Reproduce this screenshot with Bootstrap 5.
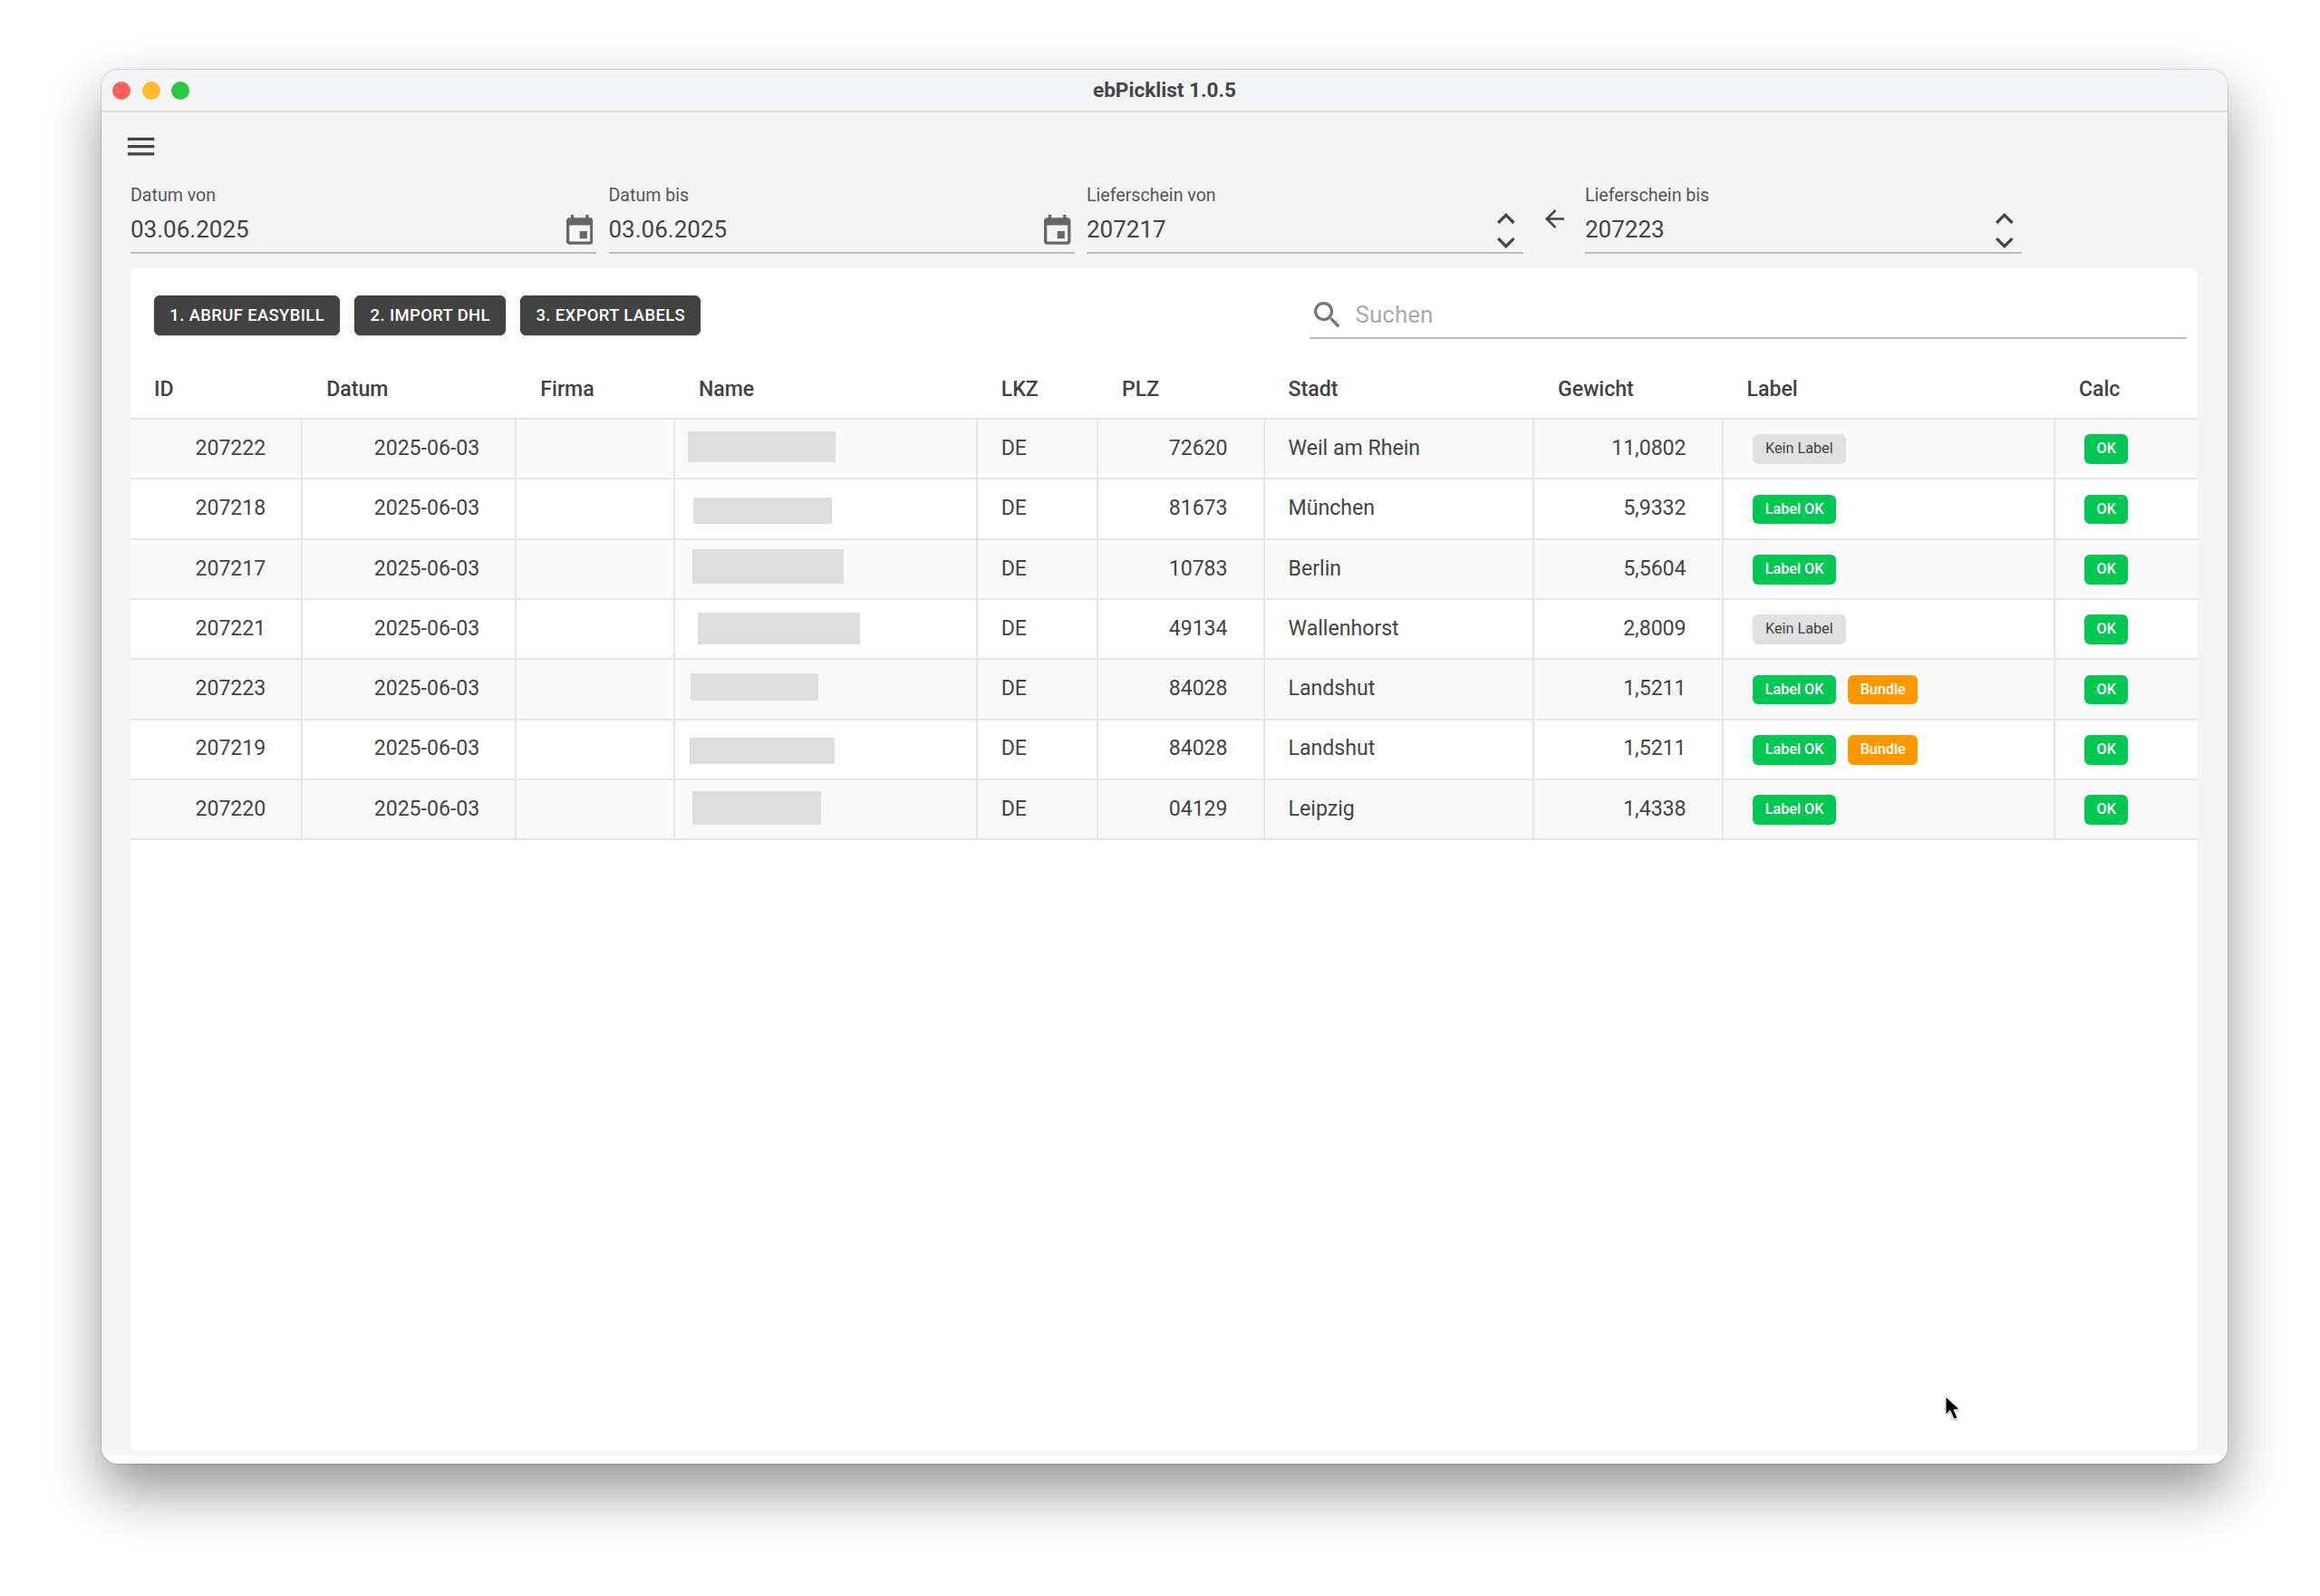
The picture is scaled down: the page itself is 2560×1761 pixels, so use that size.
<!DOCTYPE html>
<html lang="de">
<head>
<meta charset="utf-8">
<title>ebPicklist 1.0.5</title>
<link href="https://cdn.jsdelivr.net/npm/bootstrap@5.3.0/dist/css/bootstrap.min.css" rel="stylesheet">
<style>
html,body{height:100%;background:#fff;overflow:hidden}
body{font-family:Roboto,"Liberation Sans",sans-serif;color:#444;padding:77px 102px 0 112px;position:relative}
.appwin{width:2346px;height:1538px;border-radius:18px;background:#fff;box-shadow:0 30px 62px 0 rgba(0,0,0,.42),0 0 0 1px rgba(0,0,0,.13);overflow:hidden}
.titlebar{height:47px;background:#f4f5f7;border-bottom:2px solid #dcdcdc;display:grid;grid-template-columns:1fr auto 1fr;align-items:center;padding:0 12px}
.lights{gap:12.5px}
.tl{width:20px;height:20px;border-radius:50%}
.tl-r{background:#ff5f57}.tl-y{background:#febc2e}.tl-g{background:#28c840}
.apptitle{font-size:22.6px;font-weight:700;color:#454545}
.appbody{height:1482px;background:#f5f5f5;padding:0 33px 5px 32px}
.menurow{height:79px;padding-top:18px}
.menurow svg{width:39.2px;height:39.2px;margin-left:-8.5px;fill:#444;display:block}
.fld{flex:none;height:77px;border-bottom:2px solid #bdbdbd}
.fld-date{width:514px;margin-right:13.5px}
.fld-num{width:482px}
.fldlabel{font-size:19.6px;line-height:25px;color:#555;display:block}
.fldval{font-size:26px;line-height:30px;color:#444;padding-top:10px}
.calico{width:29.4px;height:32.7px;fill:#666;margin:9px 4px 0 0;flex:none}
.spin{gap:14.5px;margin:7px 9px 0 0;flex:none}
.spin svg{width:19.6px;height:12.1px;fill:#444;display:block}
.backico{width:21px;height:21px;fill:#444;margin:28px 23px 0 24px;flex:none}
.sheet{height:1305px;margin-top:16px;border-radius:6px;overflow:hidden}
.tools{height:100px;padding:30px 12px 0 26px}
.toolbtn{--bs-btn-bg:#424242;--bs-btn-border-color:#424242;--bs-btn-hover-bg:#424242;font-family:inherit;font-size:18.4px;font-weight:500;letter-spacing:.4px;text-transform:uppercase;height:44px;padding:0 16.3px 1px;border-radius:6px;line-height:42px;white-space:nowrap;box-shadow:0 1px 3px rgba(0,0,0,.2)}
.toolgap{gap:16px}
.seek{width:968.5px;height:48px;border-bottom:2px solid #bdbdbd;padding:4px 0 0 5px}
.seek svg{width:28.5px;height:28.5px;fill:#757575;margin-right:17.5px;margin-top:2.5px;flex:none}
.seek span{font-size:26px;color:#aaa;line-height:34px}
table.picktbl{--bs-table-striped-bg:#fafafa;--bs-table-bg:#fff;--bs-table-color:#444;--bs-table-striped-color:#444;margin:0;table-layout:fixed;width:2280.5px;border-collapse:separate;border-spacing:0;font-size:23.1px}
table.picktbl>thead>tr>th{height:67px;padding:3px 0 0 26px;font-weight:500;color:#424242;border-bottom:2px solid #e6e6e6;box-sizing:border-box;vertical-align:middle}
table.picktbl>tbody>tr>td{height:66.33px;padding:0 26px 0 26px;border-bottom:2px solid #e6e6e6;border-right:2px solid #e6e6e6;box-sizing:border-box;vertical-align:middle;color:#444}
table.picktbl>tbody>tr>td:last-child{border-right:0}
table.picktbl>tbody>tr>td.numcell{padding-right:39px;text-align:right}
table.picktbl>tbody>tr>td.namecell{padding:0;vertical-align:top}
table.picktbl>tbody>tr>td.chipcell{padding:1px 0 1px 32.5px}
.blank{display:block;background:#dedede}
.blank-1{margin:13px 0 0 14px;width:163px;height:33.5px}
.blank-2{margin:20px 0 0 20px;width:153px;height:28.5px}
.blank-3{margin:10.5px 0 0 19px;width:167px;height:37.5px}
.blank-4{margin:14px 0 0 25.5px;width:179px;height:35px}
.blank-5{margin:14.5px 0 0 17px;width:141px;height:30.5px}
.blank-6{margin:19px 0 0 16px;width:160px;height:29.5px}
.blank-7{margin:12.5px 0 0 19px;width:142px;height:37px}
.chip{font-family:inherit;font-size:16.2px;font-weight:500;line-height:32.5px;height:32.5px;padding:0 13.6px;border-radius:6px;letter-spacing:0;vertical-align:middle}
.chip-ok{background:#00c853;color:#fff}
.chip-calc{padding:0 13.2px}
.chip-warn{background:#ff9800;color:#fff;margin-left:13px}
.chip-none{background:#e0e0e0;color:#424242;padding:0 14px;font-weight:400}
.pointer{position:absolute;left:2145px;top:1539px;width:20px;height:30px;filter:drop-shadow(0 1px 1px rgba(0,0,0,.35))}
.c1{width:190.3px}.c2{width:236px}.c3{width:174.6px}.c4{width:333.8px}.c5{width:133.4px}.c6{width:183.5px}.c7{width:297.5px}.c8{width:208.5px}.c9{width:366.3px}.c10{width:156.6px}
</style>
</head>
<body>
<div class="appwin d-flex flex-column">
  <div class="titlebar">
    <div class="lights d-flex"><span class="tl tl-r"></span><span class="tl tl-y"></span><span class="tl tl-g"></span></div>
    <div class="apptitle">ebPicklist 1.0.5</div>
    <div></div>
  </div>
  <div class="appbody">
    <div class="menurow"><svg viewBox="0 0 24 24"><path d="M3 18h18v-2H3v2zm0-5h18v-2H3v2zm0-7v2h18V6H3z"/></svg></div>
    <div class="d-flex align-items-start">
      <div class="fld fld-date">
        <span class="fldlabel">Datum von</span>
        <div class="d-flex justify-content-between"><div class="fldval">03.06.2025</div><svg class="calico" viewBox="3 1 18 20"><path d="M17 12h-5v5h5v-5zM16 1v2H8V1H6v2H5c-1.11 0-1.99.9-1.99 2L3 19c0 1.1.89 2 2 2h14c1.1 0 2-.9 2-2V5c0-1.1-.9-2-2-2h-1V1h-2zm3 18H5V8h14v11z"/></svg></div>
      </div>
      <div class="fld fld-date">
        <span class="fldlabel">Datum bis</span>
        <div class="d-flex justify-content-between"><div class="fldval">03.06.2025</div><svg class="calico" viewBox="3 1 18 20"><path d="M17 12h-5v5h5v-5zM16 1v2H8V1H6v2H5c-1.11 0-1.99.9-1.99 2L3 19c0 1.1.89 2 2 2h14c1.1 0 2-.9 2-2V5c0-1.1-.9-2-2-2h-1V1h-2zm3 18H5V8h14v11z"/></svg></div>
      </div>
      <div class="fld fld-num">
        <span class="fldlabel">Lieferschein von</span>
        <div class="d-flex justify-content-between"><div class="fldval">207217</div>
          <div class="spin d-flex flex-column"><svg viewBox="6 8 12 7.41"><path d="M7.41 15.41L12 10.83l4.59 4.58L18 14l-6-6-6 6z"/></svg><svg viewBox="6 8.59 12 7.41"><path d="M7.41 8.59L12 13.17l4.59-4.58L18 10l-6 6-6-6 1.41-1.41z"/></svg></div>
        </div>
      </div>
      <svg class="backico" viewBox="4 4 16 16"><path d="M20 11H7.83l5.59-5.59L12 4l-8 8 8 8 1.41-1.41L7.83 13H20v-2z"/></svg>
      <div class="fld fld-num">
        <span class="fldlabel">Lieferschein bis</span>
        <div class="d-flex justify-content-between"><div class="fldval">207223</div>
          <div class="spin d-flex flex-column"><svg viewBox="6 8 12 7.41"><path d="M7.41 15.41L12 10.83l4.59 4.58L18 14l-6-6-6 6z"/></svg><svg viewBox="6 8.59 12 7.41"><path d="M7.41 8.59L12 13.17l4.59-4.58L18 10l-6 6-6-6 1.41-1.41z"/></svg></div>
        </div>
      </div>
    </div>
    <div class="sheet bg-white">
      <div class="tools d-flex justify-content-between align-items-start">
        <div class="toolgap d-flex">
          <button type="button" class="btn btn-dark toolbtn">1. Abruf Easybill</button>
          <button type="button" class="btn btn-dark toolbtn">2. Import DHL</button>
          <button type="button" class="btn btn-dark toolbtn">3. Export Labels</button>
        </div>
        <div class="seek d-flex align-items-start"><svg viewBox="3 3 17.49 17.49"><path d="M15.5 14h-.79l-.28-.27C15.41 12.59 16 11.11 16 9.5 16 5.91 13.09 3 9.5 3S3 5.91 3 9.5 5.91 16 9.5 16c1.61 0 3.09-.59 4.23-1.57l.27.28v.79l5 4.99L20.49 19l-4.99-5zm-6 0C7.01 14 5 11.99 5 9.5S7.01 5 9.5 5 14 7.01 14 9.5 11.99 14 9.5 14z"/></svg><span>Suchen</span></div>
      </div>
      <table class="table table-striped picktbl">
        <colgroup><col class="c1"><col class="c2"><col class="c3"><col class="c4"><col class="c5"><col class="c6"><col class="c7"><col class="c8"><col class="c9"><col class="c10"></colgroup>
        <thead><tr><th>ID</th><th>Datum</th><th>Firma</th><th>Name</th><th>LKZ</th><th>PLZ</th><th>Stadt</th><th>Gewicht</th><th>Label</th><th>Calc</th></tr></thead>
        <tbody>
          <tr><td class="numcell">207222</td><td class="numcell">2025-06-03</td><td></td><td class="namecell"><span class="blank blank-1"></span></td><td>DE</td><td class="numcell">72620</td><td>Weil am Rhein</td><td class="numcell">11,0802</td><td class="chipcell"><span class="badge chip chip-none">Kein Label</span></td><td class="chipcell"><span class="badge chip chip-ok chip-calc">OK</span></td></tr>
          <tr><td class="numcell">207218</td><td class="numcell">2025-06-03</td><td></td><td class="namecell"><span class="blank blank-2"></span></td><td>DE</td><td class="numcell">81673</td><td>München</td><td class="numcell">5,9332</td><td class="chipcell"><span class="badge chip chip-ok">Label OK</span></td><td class="chipcell"><span class="badge chip chip-ok chip-calc">OK</span></td></tr>
          <tr><td class="numcell">207217</td><td class="numcell">2025-06-03</td><td></td><td class="namecell"><span class="blank blank-3"></span></td><td>DE</td><td class="numcell">10783</td><td>Berlin</td><td class="numcell">5,5604</td><td class="chipcell"><span class="badge chip chip-ok">Label OK</span></td><td class="chipcell"><span class="badge chip chip-ok chip-calc">OK</span></td></tr>
          <tr><td class="numcell">207221</td><td class="numcell">2025-06-03</td><td></td><td class="namecell"><span class="blank blank-4"></span></td><td>DE</td><td class="numcell">49134</td><td>Wallenhorst</td><td class="numcell">2,8009</td><td class="chipcell"><span class="badge chip chip-none">Kein Label</span></td><td class="chipcell"><span class="badge chip chip-ok chip-calc">OK</span></td></tr>
          <tr><td class="numcell">207223</td><td class="numcell">2025-06-03</td><td></td><td class="namecell"><span class="blank blank-5"></span></td><td>DE</td><td class="numcell">84028</td><td>Landshut</td><td class="numcell">1,5211</td><td class="chipcell"><span class="badge chip chip-ok">Label OK</span><span class="badge chip chip-warn">Bundle</span></td><td class="chipcell"><span class="badge chip chip-ok chip-calc">OK</span></td></tr>
          <tr><td class="numcell">207219</td><td class="numcell">2025-06-03</td><td></td><td class="namecell"><span class="blank blank-6"></span></td><td>DE</td><td class="numcell">84028</td><td>Landshut</td><td class="numcell">1,5211</td><td class="chipcell"><span class="badge chip chip-ok">Label OK</span><span class="badge chip chip-warn">Bundle</span></td><td class="chipcell"><span class="badge chip chip-ok chip-calc">OK</span></td></tr>
          <tr><td class="numcell">207220</td><td class="numcell">2025-06-03</td><td></td><td class="namecell"><span class="blank blank-7"></span></td><td>DE</td><td class="numcell">04129</td><td>Leipzig</td><td class="numcell">1,4338</td><td class="chipcell"><span class="badge chip chip-ok">Label OK</span></td><td class="chipcell"><span class="badge chip chip-ok chip-calc">OK</span></td></tr>
        </tbody>
      </table>
    </div>
  </div>
</div>
<svg class="pointer" viewBox="0 0 20 30"><polygon points="2,2 2,22 7,17.5 11,27 15,25.5 11,16.5 17,16" fill="#000" stroke="#fff" stroke-width="1"/></svg>
<script src="https://cdn.jsdelivr.net/npm/bootstrap@5.3.0/dist/js/bootstrap.bundle.min.js"></script>
</body>
</html>
